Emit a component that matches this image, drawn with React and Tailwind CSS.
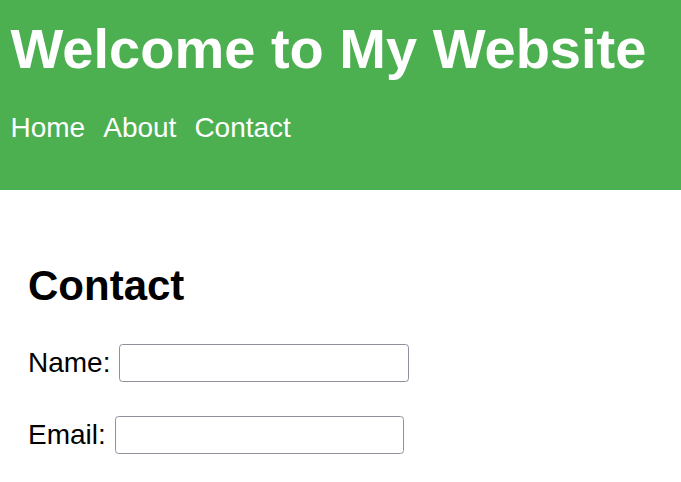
export default function App() {
  return (
    <div className="min-h-[482px] bg-white text-black" style={{ fontFamily: '"Liberation Sans", Arial, sans-serif' }}>
      <header className="bg-[#4caf50] text-white px-[10.5px] pt-[17px] pb-[46px]">
        <h1 className="text-[56px] font-bold leading-[64px] m-0">Welcome to My Website</h1>
        <nav className="mt-[31px] flex gap-[18px] text-[28px] leading-[32px]">
          <a href="#" className="text-white no-underline">Home</a>
          <a href="#" className="text-white no-underline">About</a>
          <a href="#" className="text-white no-underline">Contact</a>
        </nav>
      </header>

      <main className="pl-[28px] pt-[72px]">
        <h2 className="text-[42px] font-bold leading-[48px] m-0">Contact</h2>
        <form className="mt-[31px] text-[28px] leading-[32px]">
          <div className="flex items-center gap-[9px] h-[44px] mb-[28px]">
            <label htmlFor="name">Name:</label>
            <input
              id="name"
              type="text"
              className="w-[290px] h-[38px] border border-[#8f8f9d] rounded-[3.5px] bg-white px-2 outline-none"
            />
          </div>
          <div className="flex items-center gap-[9px] h-[44px]">
            <label htmlFor="email">Email:</label>
            <input
              id="email"
              type="email"
              className="w-[289px] h-[38px] border border-[#8f8f9d] rounded-[3.5px] bg-white px-2 outline-none"
            />
          </div>
        </form>
      </main>
    </div>
  )
}
